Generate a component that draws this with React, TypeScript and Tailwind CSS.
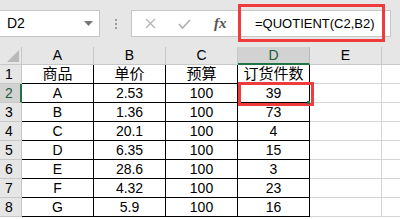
import React from 'react';

const rows = [
  ['商品', '单价', '预算', '订货件数'],
  ['A', '2.53', '100', '39'],
  ['B', '1.36', '100', '73'],
  ['C', '20.1', '100', '4'],
  ['D', '6.35', '100', '15'],
  ['E', '28.6', '100', '3'],
  ['F', '4.32', '100', '23'],
  ['G', '5.9', '100', '16'],
];

const cols = ['A', 'B', 'C', 'D', 'E'];

export default function App() {
  return (
    <div className="w-[400px] h-[219px] overflow-hidden bg-white text-black" style={{ fontFamily: '"Liberation Sans", "Noto Sans CJK SC", sans-serif' }}>
      {/* formula bar */}
      <div className="h-[47px] bg-[#e6e6e6] flex items-start pt-[10px]">
        <div className="w-[100px] h-[27px] bg-white border border-[#c6c6c6] border-l-0 flex items-center justify-between pl-[7px] pr-[6px]">
          <span className="text-[14px]">D2</span>
          <svg width="9" height="5" viewBox="0 0 9 5"><path d="M0 0h9L4.5 5z" fill="#777" /></svg>
        </div>
        <div className="w-[31px] h-[27px] flex flex-col items-center justify-center gap-[2px]">
          <span className="w-[2px] h-[2px] bg-[#9a9a9a]" />
          <span className="w-[2px] h-[2px] bg-[#9a9a9a]" />
          <span className="w-[2px] h-[2px] bg-[#9a9a9a]" />
        </div>
        <div className="flex-1 mr-[9px] h-[27px] bg-white border border-[#c6c6c6] flex items-center relative">
          <div className="w-[107px] flex items-center">
            <svg className="ml-[13px]" width="11" height="11" viewBox="0 0 11 11"><path d="M1 1l9 9M10 1l-9 9" stroke="#b4b4b4" strokeWidth="1.3" /></svg>
            <svg className="ml-[22px]" width="13" height="10" viewBox="0 0 13 10"><path d="M1 5l3.5 4L12 1" stroke="#b4b4b4" strokeWidth="1.8" fill="none" /></svg>
            <span className="ml-[23px] text-[15px] italic font-bold text-[#555]" style={{ fontFamily: '"Liberation Serif", serif' }}>fx</span>
          </div>
          <span className="text-[13px] ml-[16px]">=QUOTIENT(C2,B2)</span>
          <div className="absolute left-[106px] top-[-7px] w-[147px] h-[38px] border-[3px] border-[#ee3b3b]" />
        </div>
      </div>

      {/* grid */}
      <div className="relative grid grid-cols-[22px_72px_72px_72px_72px_72px_1fr] grid-rows-[18px_repeat(8,19px)]">
        <div className="bg-[#e6e6e6] border-r border-b border-[#c8c8c8] relative">
          <svg className="absolute right-[2px] bottom-[2px]" width="12" height="12" viewBox="0 0 12 12"><path d="M12 0v12H0z" fill="#b9b9b9" /></svg>
        </div>
        {cols.map(c => (
          <div
            key={c}
            className={c === 'D'
              ? 'bg-[#d2d2d2] border-r border-[#b8b8b8] border-b-2 border-b-[#217346] flex items-center justify-center text-[14px] text-[#1e5c3a]'
              : 'bg-[#e6e6e6] border-r border-b border-[#c8c8c8] flex items-center justify-center text-[14px]'}
          >
            {c}
          </div>
        ))}
        <div className="bg-[#e6e6e6] border-b border-[#c8c8c8]" />

        {rows.map((r, i) => (
          <React.Fragment key={i}>
            <div
              className={i === 1
                ? 'bg-[#d2d2d2] border-b border-[#c8c8c8] border-r-2 border-r-[#217346] flex items-center pl-[5px] text-[14px] text-[#1e5c3a]'
                : 'bg-[#e6e6e6] border-b border-r border-[#c8c8c8] flex items-center pl-[5px] text-[14px]'}
            >
              {i + 1}
            </div>
            {r.map((v, j) => (
              <div
                key={j}
                className={'border-r border-b border-black flex items-center justify-center ' + (i === 0 ? 'text-[15px]' : 'text-[14px]')}
              >
                {v}
              </div>
            ))}
            <div className="border-r border-b border-[#d4d4d4]" />
            <div className="border-b border-[#d4d4d4]" />
          </React.Fragment>
        ))}

        <div className="absolute left-[238px] top-[35px] w-[76px] h-[24px] border-[3px] border-[#ee3b3b]" />
        <div className="absolute left-[307px] top-[54px] w-[3px] h-[3px] bg-[#217346]" />
      </div>
    </div>
  );
}
